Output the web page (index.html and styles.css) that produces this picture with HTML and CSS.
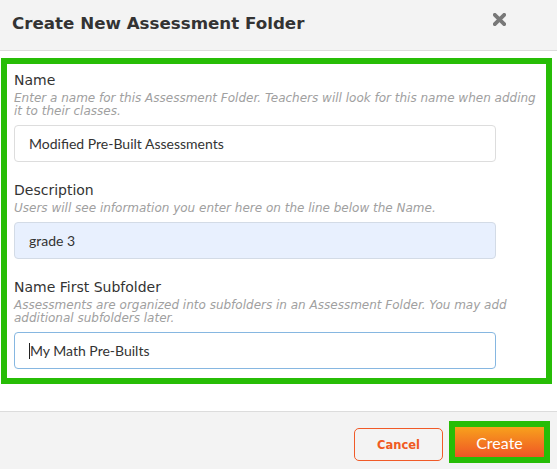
FILE: index.html
```html
<!DOCTYPE html>
<html lang="en">
<head>
<meta charset="utf-8">
<title>Create New Assessment Folder</title>
<link rel="stylesheet" href="styles.css">
</head>
<body>
<div class="modal">
  <div class="header">
    <h1 class="title">Create New Assessment Folder</h1>
    <span class="close" aria-label="Close">
      <svg width="13" height="13" viewBox="0 0 13 13"><path d="M1.8 1.8 L11.2 11.2 M11.2 1.8 L1.8 11.2" stroke="#787878" stroke-width="3.8" stroke-linecap="round"/></svg>
    </span>
  </div>
  <div class="body">
    <div class="frame">
      <div class="group">
        <div class="label">Name</div>
        <div class="help">Enter a name for this Assessment Folder. Teachers will look for this name when adding it to their classes.</div>
        <div class="field">Modified Pre-Built Assessments</div>
      </div>
      <div class="group">
        <div class="label">Description</div>
        <div class="help">Users will see information you enter here on the line below the Name.</div>
        <div class="field field-filled">grade 3</div>
      </div>
      <div class="group">
        <div class="label">Name First Subfolder</div>
        <div class="help">Assessments are organized into subfolders in an Assessment Folder. You may add additional subfolders later.</div>
        <div class="field field-focus"><span class="caret"></span>My Math Pre-Builts</div>
      </div>
    </div>
  </div>
  <div class="footer">
    <button class="btn-cancel">Cancel</button>
    <div class="create-wrap"><button class="btn-create">Create</button></div>
  </div>
</div>
</body>
</html>
```
FILE: styles.css
```css
html, body {
  margin: 0;
  padding: 0;
  background: #ffffff;
}
.modal {
  width: 557px;
  height: 469px;
  display: flex;
  flex-direction: column;
  font-family: "DejaVu Sans", Verdana, sans-serif;
  color: #333333;
}
.header {
  height: 51px;
  box-sizing: border-box;
  background: #f3f3f3;
  border-bottom: 1px solid #dcdcdc;
  display: flex;
  justify-content: space-between;
  align-items: flex-start;
  padding: 13px 51px 0 12px;
}
.title {
  margin: 0;
  font-size: 16.7px;
  line-height: 20px;
  font-weight: bold;
  color: #333333;
}
.close {
  display: block;
  width: 13px;
  height: 13px;
}
.close svg {
  display: block;
}
.body {
  padding: 7px 5px 0 1px;
  flex: 1;
}
.frame {
  border: 6px solid #27bd06;
  padding: 8px 5px 9px 7px;
}
.group + .group {
  margin-top: 20px;
}
.label {
  font-size: 14px;
  line-height: 16px;
  color: #333333;
  margin-bottom: 4px;
}
.help {
  font-size: 12px;
  line-height: 13px;
  font-style: italic;
  color: #a0a0a0;
}
.field {
  box-sizing: border-box;
  width: 482px;
  height: 37px;
  margin-top: 7px;
  border: 1px solid #dddddd;
  border-radius: 4px;
  padding: 0 14px;
  display: flex;
  align-items: center;
  font-family: Lato, "Open Sans", sans-serif;
  font-size: 14px;
  color: #333333;
  background: #ffffff;
}
.field-filled {
  background: #e8f0fe;
  border-color: #d3dbe6;
}
.field-focus {
  border-color: #86b7e1;
}
.caret {
  display: inline-block;
  width: 1px;
  height: 16px;
  background: #222222;
}
.footer {
  height: 58px;
  box-sizing: border-box;
  border-top: 1px solid #dcdcdc;
  background: #f3f3f3;
  display: flex;
  justify-content: flex-end;
  align-items: flex-start;
  gap: 6px;
  padding: 9px 7px 0 0;
}
.btn-cancel {
  margin-top: 7px;
  width: 89px;
  height: 33px;
  box-sizing: border-box;
  border: 1px solid #f05a28;
  border-radius: 5px;
  background: transparent;
  color: #f05a22;
  font-family: "DejaVu Sans", Verdana, sans-serif;
  font-weight: bold;
  font-size: 11.5px;
  padding: 0;
}
.create-wrap {
  border: 6px solid #27bd06;
  display: flex;
}
.btn-create {
  width: 89px;
  height: 30px;
  border: none;
  border-radius: 0;
  background: linear-gradient(#f8a11c, #ef5526);
  color: #ffffff;
  font-family: Lato, "Open Sans", sans-serif;
  font-size: 16px;
  padding: 0;
}
```
